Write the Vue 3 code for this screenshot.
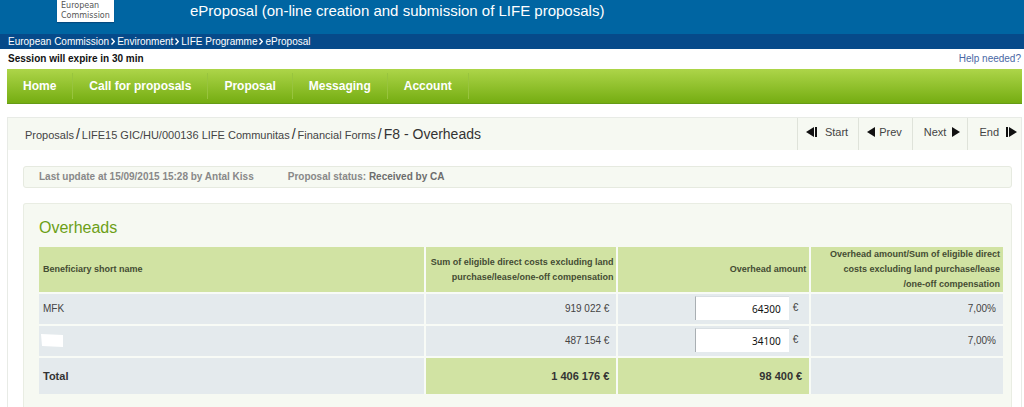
<script setup>
import { ref } from 'vue'

const crumbs = ['European Commission', 'Environment', 'LIFE Programme', 'eProposal']
const menu = ['Home', 'Call for proposals', 'Proposal', 'Messaging', 'Account']
const path = ['Proposals', 'LIFE15 GIC/HU/000136 LIFE Communitas', 'Financial Forms']
const rows = ref([
  { name: 'MFK', costs: '919 022 €', overhead: '64300', share: '7,00%' },
  { name: '', costs: '487 154 €', overhead: '34100', share: '7,00%' },
])
</script>

<template>
  <div class="page">
    <header class="banner">
      <div class="logo">European<br />Commission</div>
      <div class="app-title">eProposal (on-line creation and submission of LIFE proposals)</div>
    </header>
    <nav class="crumbs" aria-label="Site">
      <template v-for="(c, i) in crumbs" :key="c">
        <svg v-if="i" class="chevron" viewBox="0 0 4 7" aria-hidden="true"><path d="M0.5 0.5 3.3 3.5 0.5 6.5" /></svg>
        <a href="#">{{ c }}</a>
      </template>
    </nav>
    <div class="session">
      <strong>Session will expire in 30 min</strong>
      <a href="#">Help needed?</a>
    </div>
    <nav class="menu" aria-label="Main">
      <a v-for="m in menu" :key="m" href="#">{{ m }}</a>
    </nav>

    <main class="panel">
      <div class="panel-head">
        <h1 class="path">
          <template v-for="p in path" :key="p"><a href="#">{{ p }}</a><span class="slash">/</span></template><span>F8 - Overheads</span>
        </h1>
        <div class="pager">
          <button type="button" class="start">
            <svg viewBox="0 0 11 10" width="11" height="10" aria-hidden="true"><path d="M8 0V10L0 5ZM9 0H11V10H9Z" /></svg>
            Start
          </button>
          <button type="button">
            <svg viewBox="0 0 8 10" width="8" height="10" aria-hidden="true"><path d="M8 0V10L0 5Z" /></svg>
            Prev
          </button>
          <button type="button" class="next">
            Next
            <svg viewBox="0 0 8 10" width="8" height="10" aria-hidden="true"><path d="M0 0V10L8 5Z" /></svg>
          </button>
          <button type="button" class="end">
            End
            <svg viewBox="0 0 11 10" width="11" height="10" aria-hidden="true"><path d="M3 0V10L11 5ZM0 0H2V10H0Z" /></svg>
          </button>
        </div>
      </div>

      <div class="status">
        <span>Last update at 15/09/2015 15:28 by Antal Kiss</span>
        <span>Proposal status: <b>Received by CA</b></span>
      </div>

      <section class="box">
        <h2>Overheads</h2>
        <table>
          <thead>
            <tr>
              <th class="name">Beneficiary short name</th>
              <th>Sum of eligible direct costs excluding land purchase/lease/one-off compensation</th>
              <th>Overhead amount</th>
              <th>Overhead amount/Sum of eligible direct costs excluding land purchase/lease<wbr /><span class="keep">/one-off compensation</span></th>
            </tr>
          </thead>
          <tbody>
            <tr v-for="(r, i) in rows" :key="i">
              <td class="name">
                <template v-if="r.name">{{ r.name }}</template>
                <svg v-else class="blank" viewBox="0 0 22 13" width="22" height="13" aria-hidden="true"><path d="M0 0 22 1V13L1 12Z" /></svg>
              </td>
              <td>{{ r.costs }}</td>
              <td class="amount">
                <label><input v-model="r.overhead" type="text" aria-label="Overhead amount" /><span>€</span></label>
              </td>
              <td>{{ r.share }}</td>
            </tr>
          </tbody>
          <tfoot>
            <tr>
              <td class="name">Total</td>
              <td class="sum">1 406 176 €</td>
              <td class="sum">98 400 €</td>
              <td></td>
            </tr>
          </tfoot>
        </table>
      </section>
    </main>
  </div>
</template>

<style>
body {
  margin: 0;
  background: #fff;
}
</style>

<style scoped>
.page {
  display: flex;
  flex-direction: column;
  min-height: 100vh;
  font-family: "Liberation Sans", Arial, sans-serif;
  font-size: 10px;
  color: #444;
}
a {
  color: inherit;
  text-decoration: none;
}
.banner {
  display: flex;
  align-items: flex-start;
  height: 34px;
  padding-left: 57px;
  background: #0065a2;
}
.logo {
  box-sizing: border-box;
  width: 57px;
  height: 22px;
  margin-right: 76px;
  padding: 1px 0 0 4px;
  background: #fff;
  box-shadow: 0 1px 1px #034a80;
  color: #555;
  font: 8px/10px "DejaVu Sans", sans-serif;
}
.app-title {
  color: #fff;
  font-size: 15px;
  line-height: 22px;
}
.crumbs {
  display: flex;
  align-items: center;
  gap: 2px;
  height: 15px;
  padding-left: 8px;
  background: #064a8a;
  color: #fff;
}
.chevron {
  width: 4px;
  height: 7px;
  fill: none;
  stroke: #fff;
  stroke-width: 1.4;
}
.session {
  display: flex;
  justify-content: space-between;
  align-items: center;
  box-sizing: border-box;
  height: 20px;
  padding: 0 3px 2px 8px;
}
.session strong {
  color: #111;
}
.session a {
  color: #4a68a5;
}
.menu {
  display: flex;
  align-items: center;
  box-sizing: border-box;
  height: 35px;
  margin: 0 2px 13px 7px;
  border-bottom: 1px solid #659b17;
  background: linear-gradient(#add549, #75ad12);
}
.menu a {
  padding: 0 16px;
  border-right: 1px solid #98c43e;
  color: #fff;
  font-size: 12px;
  font-weight: bold;
  line-height: 26px;
}
.panel {
  display: flex;
  flex-direction: column;
  flex: 1;
  margin: 0 2px 0 7px;
  border: 1px solid #e8ebe6;
  border-bottom: 0;
}
.panel-head {
  display: flex;
  justify-content: space-between;
  height: 32px;
  background: #f6f9f2;
}
.path {
  margin: 0;
  padding-left: 17px;
  color: #333;
  font-size: 14px;
  font-weight: normal;
  line-height: 33px;
  white-space: nowrap;
}
.path a {
  color: #444;
  font-size: 11px;
}
.slash {
  margin: 0 2px;
}
.pager {
  display: flex;
}
.pager button {
  display: flex;
  align-items: center;
  gap: 4px;
  padding: 0 10px 4px 8px;
  border: 0;
  border-left: 1px solid #dfe3da;
  background: none;
  color: #444;
  font: 11px "Liberation Sans", Arial, sans-serif;
}
.pager svg {
  fill: #111;
}
.pager .start {
  gap: 8px;
}
.pager .next {
  gap: 6px;
  padding: 0 7px 4px 11px;
}
.pager .end {
  gap: 7px;
  padding: 0 4px 4px 11px;
}
.status {
  display: flex;
  align-items: center;
  gap: 34px;
  box-sizing: border-box;
  height: 22px;
  margin: 16px 9px 15px 15px;
  padding: 0 0 2px 15px;
  border: 1px solid #e6eae0;
  border-radius: 3px;
  background: #f6f9f2;
  color: #888;
  font-weight: bold;
}
.status b {
  color: #6d6d6d;
}
.box {
  flex: 1;
  margin: 0 9px 0 15px;
  padding: 0 8px 12px 15px;
  border: 1px solid #e9ede3;
  border-bottom: 0;
  border-radius: 3px 3px 0 0;
  background: #f6f9f2;
}
h2 {
  margin: 0;
  padding: 14px 0 9px;
  color: #6c9f17;
  font-size: 16px;
  font-weight: normal;
  line-height: 20px;
}
table {
  width: 100%;
  table-layout: fixed;
  border-collapse: collapse;
}
th,
td {
  padding: 0 7px;
  border-right: 2px solid #f8fbf6;
  border-bottom: 2px solid #f8fbf6;
  background: #e4eaed;
  text-align: right;
}
th:last-child,
td:last-child {
  border-right: 0;
}
th {
  height: 45px;
  padding: 0 3px;
  background: #d1e3a3;
  color: #444c33;
  font-size: 9px;
  line-height: 15px;
}
.keep {
  white-space: nowrap;
}
td {
  height: 30px;
}
tbody td {
  height: 28px;
  padding-bottom: 2px;
}
.name {
  width: 40%;
  box-sizing: border-box;
  padding-left: 4px;
  text-align: left;
}
.blank {
  display: block;
  margin-left: -2px;
  fill: #fff;
}
.amount label {
  display: flex;
  justify-content: flex-end;
  gap: 4px;
  padding-right: 4px;
  line-height: 24px;
}
.amount input {
  box-sizing: border-box;
  width: 94px;
  height: 24px;
  padding: 0 8px;
  border: 0;
  border-top: 1px solid #d9dfe3;
  border-left: 1px solid #a9afb3;
  background: #fff;
  color: #111;
  font: 10px "Noto Sans", sans-serif;
  text-align: right;
}
tfoot td {
  height: 36px;
  border-bottom: 0;
  color: #333;
  font-size: 11px;
  font-weight: bold;
}
tfoot .sum {
  background: #d1e3a3;
}
</style>
